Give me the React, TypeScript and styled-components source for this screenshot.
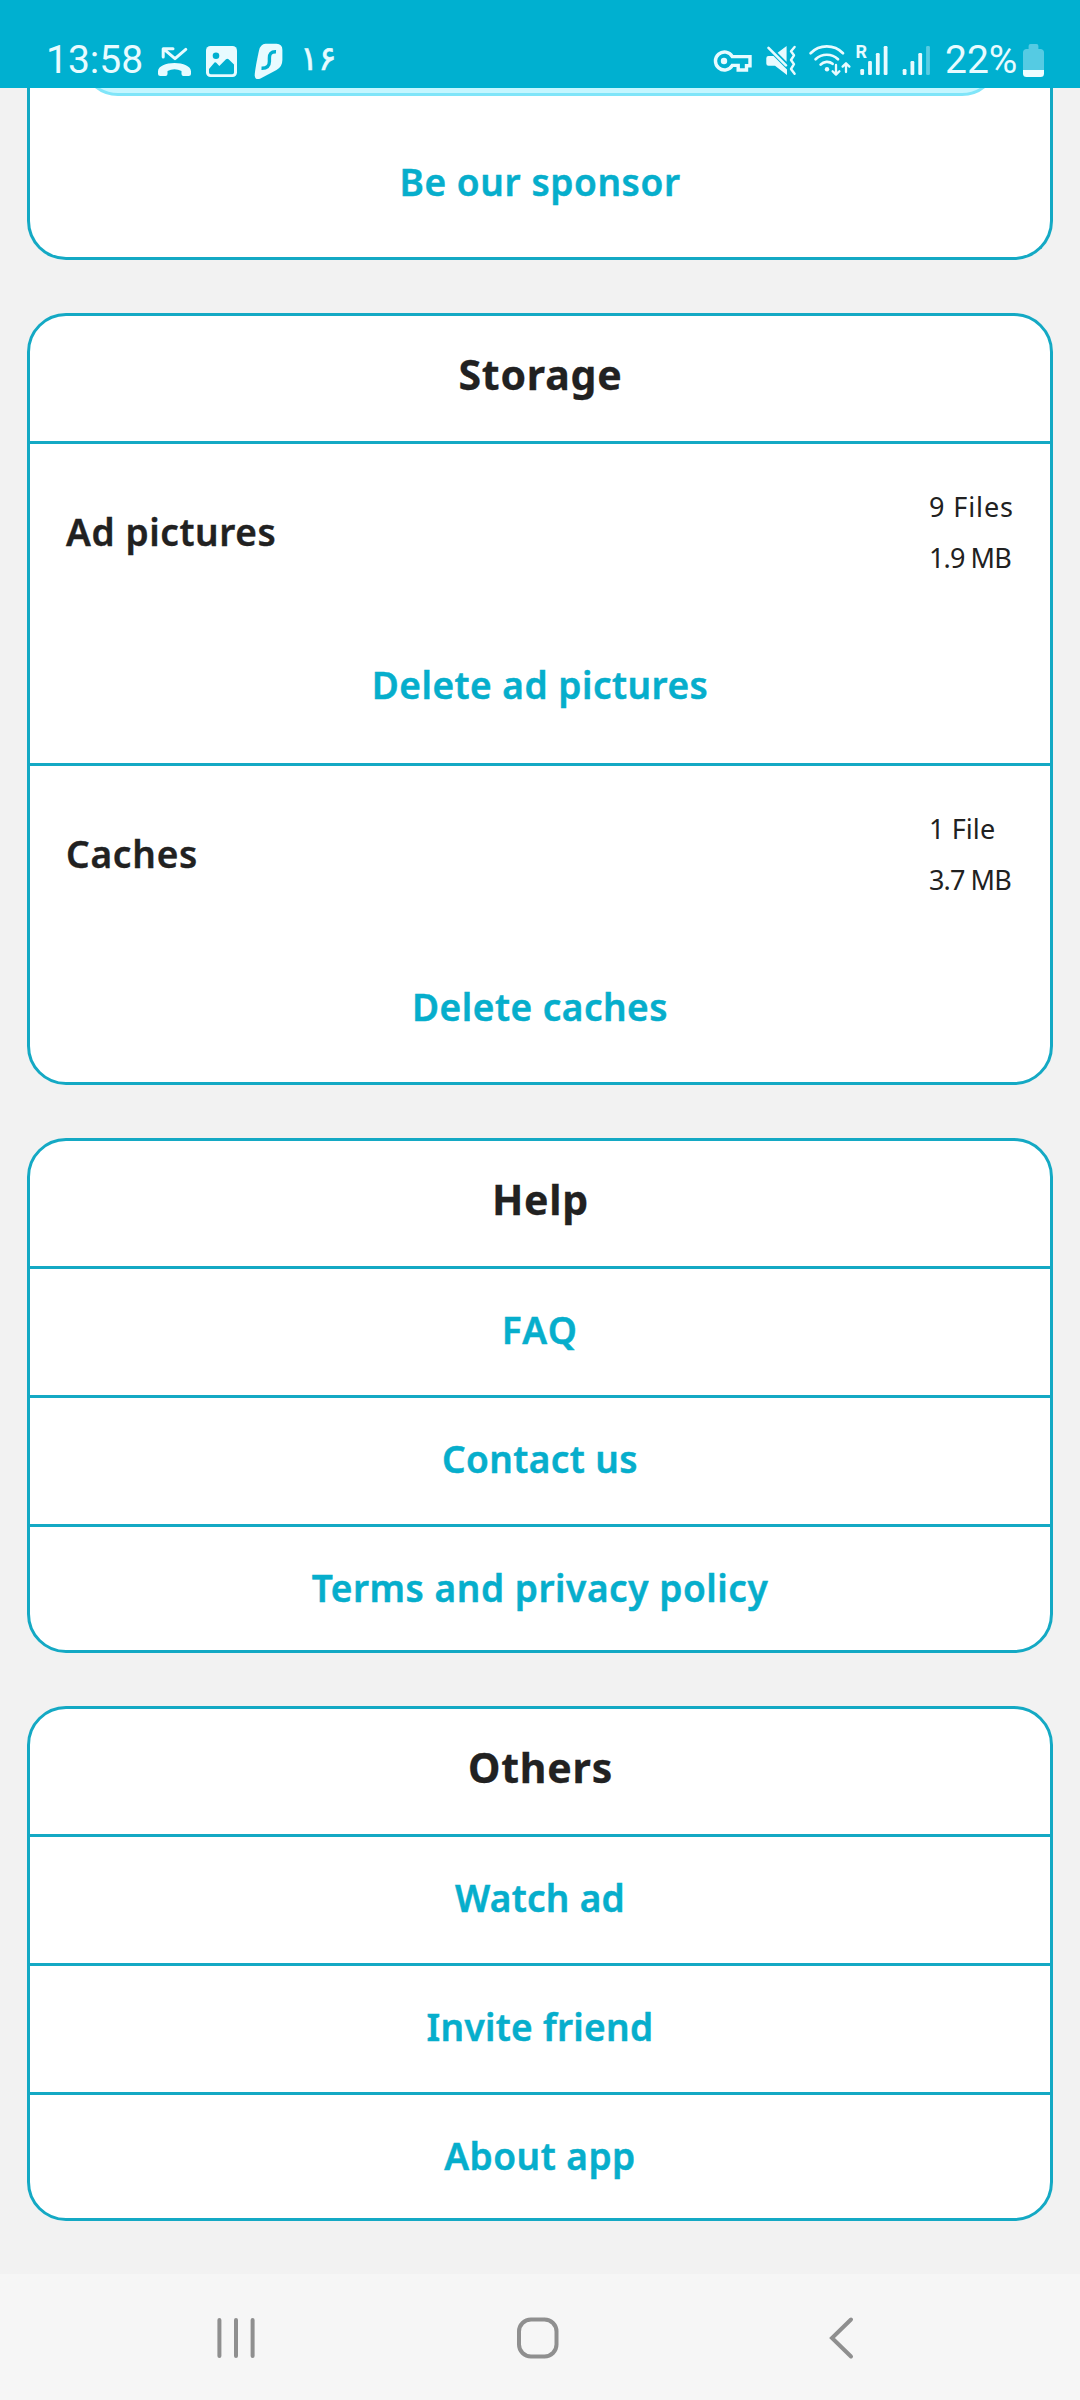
import React from 'react';
import styled, { createGlobalStyle } from 'styled-components';

const color = {
  bar: '#00b0d0',
  barInk: '#e8fbff',
  accent: '#06aecc',
  line: '#14a9c4',
  ink: '#212121',
  page: '#f2f2f2',
  nav: '#f6f6f6',
  navInk: '#8f8f8f',
};

const GlobalStyle = createGlobalStyle`
  * { box-sizing: border-box; }
  body { margin: 0; background: ${color.page}; }
`;

const Screen = styled.div`
  display: flex;
  flex-direction: column;
  width: 1080px;
  height: 2400px;
  overflow: hidden;
  background: ${color.page};
  font-family: 'Noto Sans', 'Open Sans', sans-serif;
  color: ${color.ink};
`;

/* ---------- status bar ---------- */

const StatusBar = styled.header`
  display: flex;
  flex: none;
  justify-content: space-between;
  height: 88px;
  padding: 40px 32px 0 46px;
  background: ${color.bar};
  color: ${color.barInk};
  font-family: Roboto, sans-serif;
`;

const StatusGroup = styled.div`
  display: flex;
  height: 40px;
`;

const StatusText = styled.span<{ $width: number }>`
  width: ${p => p.$width}px;
  font-size: 39px;
  line-height: 41px;
  white-space: nowrap;
`;

const DayText = styled.span`
  padding-left: 8px;
  font-family: 'DejaVu Sans', sans-serif;
  font-size: 34px;
  line-height: 37px;
  letter-spacing: -7px;
  -webkit-text-stroke: 0.6px currentColor;
`;

const Glyph = styled.svg`
  display: block;
  flex: none;
  height: 40px;
`;

const RoamingMark = styled.text`
  font: 700 18px Roboto, sans-serif;
`;

/* ---------- content ---------- */

const Content = styled.main`
  display: flex;
  flex: 1;
  flex-direction: column;
  gap: 53px;
  min-height: 0;
  padding: 0 27px;
  overflow: hidden;
`;

const Card = styled.section<{ $cut?: boolean }>`
  flex: none;
  border: 3px solid ${color.line};
  border-top-width: ${p => (p.$cut ? 0 : 3)}px;
  border-radius: ${p => (p.$cut ? '0 0 39px 39px' : '39px')};
  background: #fff;
  overflow: hidden;
`;

const BannerWindow = styled.div`
  display: flex;
  align-items: flex-end;
  height: 8px;
  margin: 0 51px 25px;
  overflow: hidden;
`;

const Banner = styled.div`
  flex: 1;
  height: 78px;
  border: 3px solid #80e5f9;
  border-radius: 37px;
  background: #c4f6ff;
`;

const Heading = styled.h2`
  height: 125px;
  margin: 0;
  padding-left: 1px;
  font-size: 41px;
  font-weight: 700;
  line-height: 117px;
  letter-spacing: 0.8px;
  text-align: center;
  -webkit-text-stroke: 0.3px currentColor;
`;

const Cell = styled.div`
  padding-bottom: 5px;
  border-top: 3px solid ${color.line};

  &:last-child {
    padding-bottom: 2px;
  }
`;

const StorageCell = styled(Cell)`
  padding-bottom: 18px;

  &:last-child {
    padding-bottom: 15px;
  }
`;

const LinkButton = styled.button<{ $track?: number }>`
  display: block;
  width: 100%;
  height: 121px;
  padding: 0;
  border: 0;
  background: none;
  color: ${color.accent};
  font-family: inherit;
  font-size: 37px;
  font-weight: 600;
  line-height: 122px;
  letter-spacing: ${p => p.$track ?? 0.5}px;
  text-align: center;
  -webkit-text-stroke: 0.5px currentColor;
`;

const SponsorLink = styled(LinkButton)`
  margin-bottom: 15px;
`;

const StorageSummary = styled.div`
  display: flex;
  justify-content: space-between;
  height: 180px;
  padding: 0 35px 0 36px;
`;

const StorageName = styled.span<{ $track: number }>`
  font-size: 37px;
  font-weight: 600;
  line-height: 176px;
  letter-spacing: ${p => p.$track}px;
  -webkit-text-stroke: 0.4px currentColor;
`;

const Stats = styled.div`
  width: 86px;
  padding-top: 37px;
`;

const Stat = styled.div<{ $track: number }>`
  font-size: 27px;
  font-weight: 400;
  line-height: 51px;
  letter-spacing: ${p => p.$track}px;
  white-space: nowrap;
`;

/* ---------- navigation bar ---------- */

const NavBar = styled.nav`
  display: flex;
  flex: none;
  justify-content: space-between;
  height: 126px;
  padding: 43px 218px 0 214px;
  background: ${color.nav};
`;

const NavIcon = styled.svg`
  display: block;
  width: 42px;
  height: 42px;
  overflow: visible;
  fill: none;
  stroke: ${color.navInk};
  stroke-width: 4;
  stroke-linecap: round;
`;

const MissedCallIcon = () => (
  <Glyph width="48" viewBox="150 40 48 40">
    <path d="M173 48.7H163.2V57M163.8 49.2L175 58.6L185.8 49.4" fill="none" stroke={color.barInk} strokeWidth="3" strokeLinecap="round" strokeLinejoin="round" />
    <path d="M158 71.5C158 66 166 63 174.5 63S191 66 191 71.5V73.5Q191 76 188.5 76H183.5Q181.5 76 181.5 74V71Q178 69.2 174.5 69.2T167.5 71V74Q167.5 76 165.5 76H160.5Q158 76 158 73.5Z" fill={color.barInk} />
  </Glyph>
);

const PictureIcon = () => (
  <Glyph width="48" viewBox="198 40 48 40">
    <rect x="206" y="46" width="31" height="31" rx="4.5" fill={color.barInk} />
    <circle cx="216" cy="55.7" r="3.3" fill={color.bar} />
    <path d="M209 69L214.5 62.5Q215.5 61.8 216.3 62.8L219.3 66L226 59.3Q227.3 58.4 228.6 59.3L234 64.5V72.5Q234 74.2 232.3 74.2H210.7Q209 74.2 209 72.5Z" fill={color.bar} />
  </Glyph>
);

const ShieldIcon = () => (
  <Glyph width="46" viewBox="246 40 46 40">
    <path d="M265.5 43.8H276.5Q282.4 44 282.4 50V60Q282.4 66.5 276.5 70L260.5 78.6Q255 80.5 254.7 75.5Q254.8 70 259 50.5Q260.4 44.2 265.5 43.8Z" fill={color.barInk} />
    <path d="M276 51.8C270.8 51.6 269.4 54 269.4 58V61.5C269.4 66 267 68.4 261.5 68.2" fill="none" stroke={color.bar} strokeWidth="3.4" />
  </Glyph>
);

const KeyIcon = () => (
  <Glyph width="52" viewBox="706 40 52 40">
    <path d="M732.3 56.6H750V65.8H746.5V70H738.2V65.4H732.3A9 9 0 1 1 732.3 56.6Z" fill="none" stroke={color.barInk} strokeWidth="3.4" />
    <circle cx="724" cy="61" r="3.2" fill={color.barInk} />
  </Glyph>
);

const MuteVibrateIcon = () => (
  <Glyph width="44" viewBox="758 40 44 40">
    <path d="M786.6 46V61.8L777.6 52.8ZM768.5 56H773.5L787 69.5V75L775 65.8H768.5Q766.3 65.8 766.3 63.6V58.2Q766.3 56 768.5 56Z" fill={color.barInk} />
    <path d="M768.5 47.8L786 65.3" stroke={color.barInk} strokeWidth="2.6" strokeLinecap="round" />
    <path d="M794.6 47L791 51.3L794 55.3L791 60L794 64.2L791 69L794.6 73.8" fill="none" stroke={color.barInk} strokeWidth="2.4" strokeLinecap="round" strokeLinejoin="round" />
  </Glyph>
);

const WifiIcon = () => (
  <Glyph width="50" viewBox="802 40 50 40">
    <g fill="none" stroke={color.barInk} strokeWidth="2.7" strokeLinecap="round" strokeLinejoin="round">
      <path d="M810.6 53.3A22.6 22.6 0 0 1 843 53.3M815.6 59.3A16 16 0 0 1 838 59.3M820.6 64.6A8.8 8.8 0 0 1 832.6 63.8" />
      <path d="M836 65V74M832.6 71.2L836 74.6L839.4 71.2M846 72V63.6M842.6 66.6L846 63.2L849.4 66.6" strokeWidth="2.3" />
    </g>
    <circle cx="827" cy="69.3" r="2.2" fill={color.barInk} />
  </Glyph>
);

const SignalBars = ({ x, faded }: { x: number; faded?: boolean }) => (
  <g fill={color.barInk}>
    <rect x={x} y="69" width="3.8" height="6" rx="1.2" />
    <rect x={x + 7.8} y="61" width="3.8" height="14" rx="1.2" />
    <rect x={x + 15.6} y="53" width="3.8" height="22" rx="1.2" />
    <rect x={x + 23.4} y="46" width="3.8" height="29" rx="1.2" opacity={faded ? 0.38 : 1} />
  </g>
);

const BatteryIcon = () => (
  <Glyph width="30" viewBox="1018 40 30 40">
    <path d="M1030.5 44H1036.5Q1038.4 44 1038.4 46V49H1041Q1044 49.5 1044 52.5V70H1023V52.5Q1023 49.5 1026 49H1028.6V46Q1028.6 44 1030.5 44Z" fill="#55cbe3" />
    <path d="M1023 70H1044V73.5Q1044 77 1040.5 77H1026.5Q1023 77 1023 73.5Z" fill="#f0fdff" />
  </Glyph>
);

interface StorageEntry {
  name: string;
  nameTrack: number;
  stats: [string, number][];
  action: string;
}

const storage: StorageEntry[] = [
  { name: 'Ad pictures', nameTrack: 0.6, stats: [['9 Files', 0.9], ['1.9 MB', -0.9]], action: 'Delete ad pictures' },
  { name: 'Caches', nameTrack: 0.8, stats: [['1 File', 0.1], ['3.7 MB', -0.9]], action: 'Delete caches' },
];

const linkCards: { title: string; links: [string, number][] }[] = [
  { title: 'Help', links: [['FAQ', 1.4], ['Contact us', 0.4], ['Terms and privacy policy', 0.55]] },
  { title: 'Others', links: [['Watch ad', 0.3], ['Invite friend', 0.3], ['About app', 0.5]] },
];

export default function App() {
  return (
    <Screen>
      <GlobalStyle />
      <StatusBar>
        <StatusGroup>
          <StatusText $width={104}>13:58</StatusText>
          <MissedCallIcon />
          <PictureIcon />
          <ShieldIcon />
          <DayText>۱۶</DayText>
        </StatusGroup>
        <StatusGroup>
          <KeyIcon />
          <MuteVibrateIcon />
          <WifiIcon />
          <Glyph width="42" viewBox="852 40 42 40">
            <RoamingMark x="855.6" y="58" fill={color.barInk}>R</RoamingMark>
            <SignalBars x={860.3} />
          </Glyph>
          <Glyph width="51" viewBox="894 40 51 40">
            <SignalBars x={902.7} faded />
          </Glyph>
          <StatusText $width={73}>22%</StatusText>
          <BatteryIcon />
        </StatusGroup>
      </StatusBar>

      <Content>
        <Card $cut>
          <BannerWindow>
            <Banner />
          </BannerWindow>
          <SponsorLink $track={0.6}>Be our sponsor</SponsorLink>
        </Card>

        <Card>
          <Heading>Storage</Heading>
          {storage.map(entry => (
            <StorageCell key={entry.name}>
              <StorageSummary>
                <StorageName $track={entry.nameTrack}>{entry.name}</StorageName>
                <Stats>
                  {entry.stats.map(([text, track]) => (
                    <Stat key={text} $track={track}>{text}</Stat>
                  ))}
                </Stats>
              </StorageSummary>
              <LinkButton>{entry.action}</LinkButton>
            </StorageCell>
          ))}
        </Card>

        {linkCards.map(card => (
          <Card key={card.title}>
            <Heading>{card.title}</Heading>
            {card.links.map(([text, track]) => (
              <Cell key={text}>
                <LinkButton $track={track}>{text}</LinkButton>
              </Cell>
            ))}
          </Card>
        ))}
      </Content>

      <NavBar>
        <NavIcon viewBox="0 0 42 42">
          <path d="M5.4 3V39M22 3V39M38.6 3V39" />
        </NavIcon>
        <NavIcon viewBox="0 0 42 42">
          <rect x="2" y="2.5" width="37.5" height="37" rx="12" />
        </NavIcon>
        <NavIcon viewBox="0 0 42 42">
          <path d="M31 2.5L12 21L31 39.5" />
        </NavIcon>
      </NavBar>
    </Screen>
  );
}
